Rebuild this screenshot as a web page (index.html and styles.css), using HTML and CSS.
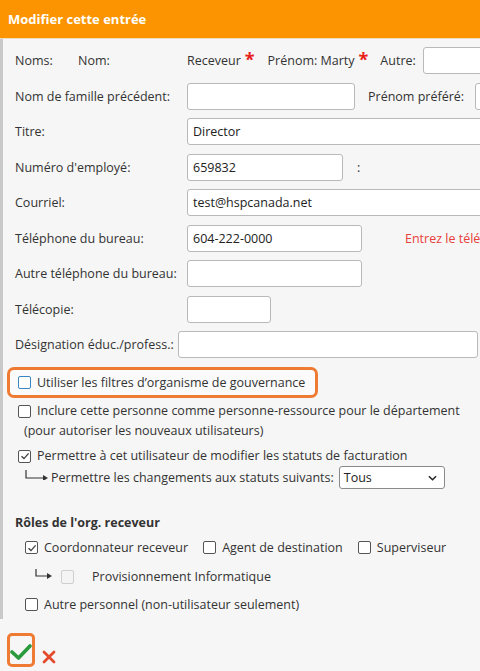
FILE: index.html
```html
<!DOCTYPE html>
<html lang="fr">
<head>
<meta charset="utf-8">
<title>Modifier cette entrée</title>
<link rel="stylesheet" href="styles.css">
</head>
<body>
<div class="page">
  <div class="header">Modifier cette entrée</div>
  <div class="content">
    <div class="row">
      <span class="lbl-noms">Noms:</span>
      <span class="lbl-nom">Nom:</span>
      <span class="val">Receveur</span><span class="star">*</span>
      <span class="val prenom">Prénom: Marty</span><span class="star">*</span>
      <span class="autre">Autre:</span>
      <span class="input w-autre"></span>
    </div>
    <div class="row">
      <span class="label">Nom de famille précédent:</span>
      <span class="input w168"></span>
      <span class="pref">Prénom préféré:</span>
      <span class="input w-pref"></span>
    </div>
    <div class="row">
      <span class="label">Titre:</span>
      <span class="input w-full">Director</span>
    </div>
    <div class="row">
      <span class="label">Numéro d'employé:</span>
      <span class="input w156">659832</span>
      <span class="colon">:</span>
    </div>
    <div class="row">
      <span class="label">Courriel:</span>
      <span class="input w-full">test@hspcanada.net</span>
    </div>
    <div class="row">
      <span class="label">Téléphone du bureau:</span>
      <span class="input w175">604-222-0000</span>
      <span class="error">Entrez le téléphone</span>
    </div>
    <div class="row">
      <span class="label">Autre téléphone du bureau:</span>
      <span class="input w175"></span>
    </div>
    <div class="row">
      <span class="label">Télécopie:</span>
      <span class="input w84"></span>
    </div>
    <div class="row">
      <span class="label-short">Désignation éduc./profess.:</span>
      <span class="input w-desig"></span>
    </div>

    <div class="highlight">
      <span class="cb cb-blue"></span>
      <span>Utiliser les filtres d’organisme de gouvernance</span>
    </div>

    <div class="check-line two-lines">
      <span class="cb"></span>
      <span>Inclure cette personne comme personne-ressource pour le département<br><span class="indent-text">(pour autoriser les nouveaux utilisateurs)</span></span>
    </div>

    <div class="check-line billing">
      <span class="cb cb-checked"><svg viewBox="0 0 12 12" width="12" height="12"><path d="M2.5 6.2 L5 8.6 L9.6 3.4" fill="none" stroke="#444" stroke-width="1.4"/></svg></span>
      <span>Permettre à cet utilisateur de modifier les statuts de facturation</span>
    </div>

    <div class="sub-line">
      <svg class="arrow" viewBox="0 0 24 10" width="24" height="10"><path d="M1 0 V8 H19" fill="none" stroke="#333" stroke-width="1.2"/><path d="M18 5 L23 8 L18 11 Z" fill="#333"/></svg>
      <span>Permettre les changements aux statuts suivants:</span>
      <span class="select">Tous<svg class="chev" viewBox="0 0 10 6" width="9" height="6"><path d="M1 1 L5 5 L9 1" fill="none" stroke="#222" stroke-width="1.6"/></svg></span>
    </div>

    <div class="section-title">Rôles de l'org. receveur</div>

    <div class="roles first">
      <span class="cb cb-checked"><svg viewBox="0 0 12 12" width="12" height="12"><path d="M2.5 6.2 L5 8.6 L9.6 3.4" fill="none" stroke="#444" stroke-width="1.4"/></svg></span>
      <span class="role-text r1">Coordonnateur receveur</span>
      <span class="cb"></span>
      <span class="role-text r2">Agent de destination</span>
      <span class="cb"></span>
      <span class="role-text">Superviseur</span>
    </div>

    <div class="prov">
      <svg class="arrow2" viewBox="0 0 18 10" width="18" height="10"><path d="M1 0 V7 H13" fill="none" stroke="#333" stroke-width="1.2"/><path d="M12 4 L17 7 L12 10 Z" fill="#333"/></svg>
      <span class="cb cb-disabled"></span>
      <span class="prov-text">Provisionnement Informatique</span>
    </div>

    <div class="roles other">
      <span class="cb"></span>
      <span class="role-text">Autre personnel (non-utilisateur seulement)</span>
    </div>
  </div>
  <div class="actions">
    <span class="save-box"><svg viewBox="0 0 22 18" width="22" height="18"><path d="M2 9 L8.5 15 L20 3" fill="none" stroke="#2a9a3c" stroke-width="3.6" stroke-linecap="round" stroke-linejoin="round"/></svg></span>
    <span class="cancel"><svg viewBox="0 0 14 14" width="14" height="14"><path d="M2 2 L12 12 M12 2 L2 12" fill="none" stroke="#e44a2e" stroke-width="2.8" stroke-linecap="round"/></svg></span>
  </div>
</div>
</body>
</html>
```

FILE: styles.css
```css
html, body {
  margin: 0;
  padding: 0;
  background: #f6f6f6;
  overflow: hidden;
}
body {
  width: 480px;
  height: 671px;
  font-family: "Open Sans", "Noto Sans", sans-serif;
  font-size: 12.5px;
  color: #333;
}
.page {
  width: 480px;
  height: 671px;
  overflow: hidden;
  position: relative;
}
.header {
  height: 38px;
  background: #fb9400;
  color: #fff;
  font-weight: 700;
  font-size: 13px;
  line-height: 38px;
  padding-left: 8px;
  border-bottom: 1px solid #f0dcc0;
}
.content {
  border-left: 3px solid #c9c9c9;
  padding-left: 12px;
  padding-top: 4px;
  width: 700px;
}
.row {
  height: 35.5px;
  display: flex;
  align-items: center;
  white-space: nowrap;
}
.label { width: 172px; flex: none; }
.label-short { width: 163px; flex: none; }
.lbl-noms { width: 63px; flex: none; }
.lbl-nom { width: 109px; flex: none; }
.star {
  color: #e8201a;
  font-size: 18px;
  font-weight: 700;
  line-height: 1;
  margin-left: 4px;
  position: relative;
  top: -2px;
}
.prenom { margin-left: 13px; }
.autre { margin-left: 12px; margin-right: 7px; }
.input {
  flex: none;
  box-sizing: border-box;
  height: 27px;
  background: #fff;
  border: 1px solid #b9b9b9;
  border-radius: 3px;
  padding-left: 5px;
  line-height: 25px;
  color: #222;
}
.w-autre { width: 120px; }
.w168 { width: 168px; }
.w-pref { width: 60px; }
.pref { margin-left: 13px; margin-right: 11px; }
.w-full { width: 320px; }
.w156 { width: 156px; }
.colon { margin-left: 14px; }
.w175 { width: 175px; }
.error { color: #e8403a; margin-left: 43px; }
.w84 { width: 84px; }
.w-desig { width: 300px; }

.highlight {
  margin-top: 4px;
  margin-left: -8px;
  width: 311px;
  height: 31px;
  box-sizing: border-box;
  border: 3px solid #ee7a33;
  border-radius: 7px;
  display: flex;
  align-items: center;
  padding-left: 8px;
  background: #fafafa;
}
.cb {
  flex: none;
  width: 13px;
  height: 13px;
  box-sizing: border-box;
  border: 1.5px solid #555;
  border-radius: 2px;
  margin-right: 6px;
  display: inline-flex;
  align-items: center;
  justify-content: center;
  background: #fff;
}
.cb svg { display: block; margin: -1.5px; }
.cb-blue { border-color: #3a86c4; }
.cb-disabled { border: 1px solid #cfcfcf; width: 13px; height: 14px; background: #f4f4f4; }
.check-line {
  display: flex;
  align-items: flex-start;
  margin-left: 3px;
}
.check-line .cb { margin-top: 4px; }
.two-lines { margin-top: 3px; line-height: 20px; }
.indent-text { margin-left: -13px; }
.billing { margin-top: 5px; line-height: 20px; }
.sub-line {
  display: flex;
  align-items: center;
  height: 24px;
  white-space: nowrap;
}
.arrow { margin-left: 10px; margin-right: 2px; position: relative; top: -3px; }
.select {
  margin-left: 5px;
  width: 106px;
  height: 23px;
  box-sizing: border-box;
  border: 1px solid #8a8a8a;
  border-radius: 3px;
  background: #fff;
  display: flex;
  align-items: center;
  justify-content: space-between;
  padding: 0 7px 0 4px;
  color: #222;
}
.section-title {
  font-weight: 700;
  margin-top: 23px;
  height: 20px;
  line-height: 20px;
}
.roles {
  display: flex;
  align-items: center;
  height: 28px;
  margin-left: 10px;
  white-space: nowrap;
}
.roles.first { height: 30px; }
.roles .cb { margin-right: 6px; }
.r1 { margin-right: 15px; }
.r2 { margin-right: 15px; }
.prov {
  display: flex;
  align-items: center;
  height: 28px;
  margin-left: 20px;
}
.arrow2 { margin-right: 8px; position: relative; top: -3px; }
.prov-text { margin-left: 12px; }
.actions {
  position: absolute;
  left: 7px;
  top: 633px;
  display: flex;
  align-items: center;
}
.save-box {
  width: 28px;
  height: 34px;
  box-sizing: border-box;
  border: 3px solid #ee7a33;
  border-radius: 5px;
  display: flex;
  align-items: flex-end;
  justify-content: center;
  padding-bottom: 3px;
}
.cancel { margin-left: 7px; margin-top: 14px; display: flex; }
```
